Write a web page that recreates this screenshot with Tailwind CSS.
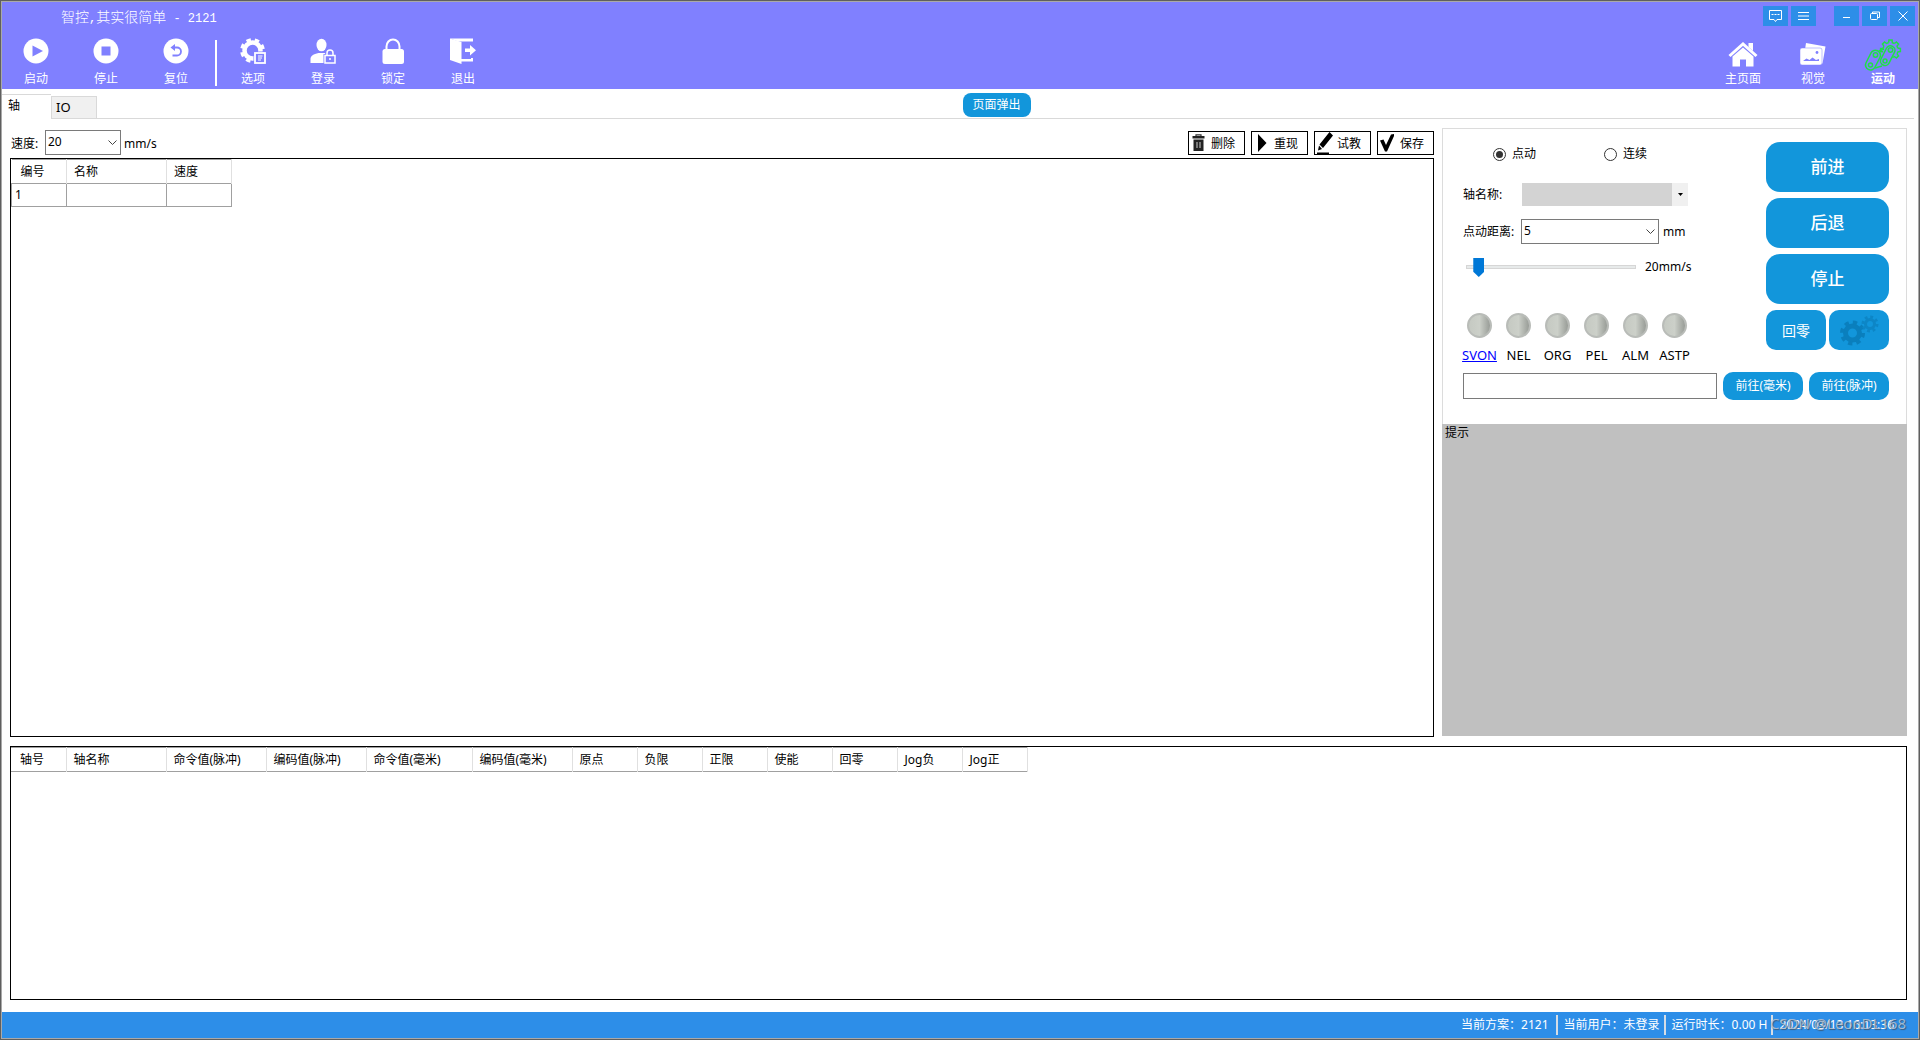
<!DOCTYPE html>
<html lang="zh-CN">
<head>
<meta charset="utf-8">
<meta name="viewport" content="width=device-width, initial-scale=1">
<title>智控,其实很简单 - 2121</title>
<script src="https://cdn.jsdelivr.net/npm/@tailwindcss/browser@4"></script>
</head>
<body class="h-screen border border-[#5f5f5f] bg-white font-['Noto_Sans','Noto_Sans_CJK_SC',sans-serif] text-[12px] leading-4 text-black">
<div class="flex h-full flex-col border border-[#a9a9a9]">

  <!-- Title bar and main toolbar -->
  <header class="flex h-[87px] shrink-0 flex-col bg-[#8080ff] text-white">
    <div class="flex h-[34px] items-start justify-between pr-[3px]">
      <h1 class="pt-1 pl-[59px] font-['Noto_Sans_CJK_SC',sans-serif] text-[14px] leading-5 font-light whitespace-pre">智控<span class="font-['Liberation_Mono',monospace] text-[12px]">,</span>其实很简单<span class="font-['Liberation_Mono',monospace] text-[12px]"> - 2121</span></h1>
      <div class="flex gap-[3px] pt-1">
        <button class="flex h-5 w-[25px] items-center justify-center bg-[#2d8ee8]" aria-label="消息">
          <svg class="h-3 w-[13px]" viewBox="0 0 13 12" fill="none" stroke="#fff"><path d="M.5.5h12v9H8l-1.500 2-1.500-2H.5z"/><path d="M2.500 4.500h8" stroke-dasharray="2 1"/></svg>
        </button>
        <button class="mr-[15px] flex h-5 w-[25px] items-center justify-center bg-[#2d8ee8]" aria-label="菜单">
          <svg class="h-2 w-[11px]" viewBox="0 0 11 8" stroke="#fff"><path d="M0 .5h11M0 4h11M0 7.500h11"/></svg>
        </button>
        <button class="flex h-5 w-[25px] items-center justify-center bg-[#2d8ee8]" aria-label="最小化">
          <svg class="mt-1 h-1 w-[7px]" viewBox="0 0 7 4" stroke="#fff"><path d="M0 1.500h7"/></svg>
        </button>
        <button class="flex h-5 w-[25px] items-center justify-center bg-[#2d8ee8]" aria-label="还原">
          <svg class="h-[10px] w-3" viewBox="0 0 12 10" fill="none" stroke="#fff"><rect x="1.500" y="2.500" width="7" height="6" rx="1"/><path d="M3.500 2V1h7v5.500H9"/></svg>
        </button>
        <button class="flex h-5 w-[25px] items-center justify-center bg-[#2d8ee8]" aria-label="关闭">
          <svg class="size-[10px]" viewBox="0 0 10 10" stroke="#fff"><path d="M.5.5l9 9M9.500.5l-9 9"/></svg>
        </button>
      </div>
    </div>

    <div class="flex justify-between pr-[15px] pl-[14px] font-['Noto_Sans_CJK_SC',sans-serif]">
      <div class="flex">
        <div class="flex gap-[30px]">
          <button class="flex w-10 flex-col items-center gap-[6px] pt-[2px]">
            <svg class="size-[26px]" viewBox="0 0 26 26"><circle cx="13" cy="13" r="12.500" fill="#fff"/><path d="M9.500 7.500v11L20 13z" fill="#8080ff"/></svg>
            <span>启动</span>
          </button>
          <button class="flex w-10 flex-col items-center gap-[6px] pt-[2px]">
            <svg class="size-[26px]" viewBox="0 0 26 26"><circle cx="13" cy="13" r="12.500" fill="#fff"/><rect x="8.500" y="8.500" width="9" height="9" fill="#8080ff"/></svg>
            <span>停止</span>
          </button>
          <button class="flex w-10 flex-col items-center gap-[6px] pt-[2px]">
            <svg class="size-[26px]" viewBox="0 0 26 26"><circle cx="13" cy="13" r="12.500" fill="#fff"/><path d="M10 9.500h4a4 4 0 0 1 0 8H9.500" fill="none" stroke="#8080ff" stroke-width="1.800"/><path d="M12 6v7L7.500 9.500z" fill="#8080ff"/></svg>
            <span>复位</span>
          </button>
        </div>
        <div class="mt-1 mr-4 ml-[19px] h-[46px] w-[2px] bg-white"></div>
        <div class="flex gap-[30px]">
          <button class="flex w-10 flex-col items-center gap-[6px] pt-[2px]">
            <svg class="size-[26px]" viewBox="0 0 26 26" fill="none">
              <circle cx="12.500" cy="12.500" r="8" stroke="#fff" stroke-width="4.500"/>
              <circle cx="12.500" cy="12.500" r="10.700" stroke="#fff" stroke-width="3.400" stroke-dasharray="4.400 4" stroke-dashoffset="-2"/>
              <path d="M13.500 13.500H26V26H13.500z" fill="#8080ff"/>
              <rect x="15" y="15" width="10" height="10" stroke="#fff" stroke-width="1.800"/>
              <path d="M18 18h4.500M18 20h4M18 22h3" stroke="#fff"/>
            </svg>
            <span>选项</span>
          </button>
          <button class="flex w-10 flex-col items-center gap-[6px] pt-[2px]">
            <svg class="size-[26px]" viewBox="0 0 26 26" fill="none">
              <ellipse cx="11.500" cy="7" rx="5" ry="6.300" fill="#fff"/>
              <path d="M.5 25v-4c0-3 3-5 8-6h6c1 0 1 1 0 2v8z" fill="#fff"/>
              <path d="M13.500 16h12v10h-12z" fill="#8080ff"/>
              <rect x="15" y="17.500" width="10" height="7.500" stroke="#fff" stroke-width="1.500"/>
              <path d="M17 17v-2a3 3 0 0 1 6 0v2" stroke="#fff" stroke-width="1.500"/>
              <circle cx="20" cy="21" r="1" fill="#fff"/>
            </svg>
            <span>登录</span>
          </button>
          <button class="flex w-10 flex-col items-center gap-[6px] pt-[2px]">
            <svg class="size-[26px]" viewBox="0 0 26 26"><rect x="2.500" y="11" width="21.500" height="15" rx="2.500" fill="#fff"/><path d="M6.500 12V8.500a6.500 7 0 0 1 13 0V12" fill="none" stroke="#fff" stroke-width="2"/></svg>
            <span>锁定</span>
          </button>
          <button class="flex w-10 flex-col items-center gap-[6px] pt-[2px]">
            <svg class="size-[26px]" viewBox="0 0 26 26" fill="#fff"><path d="M0 .5l11.500 3.500v22L0 22z"/><path d="M0 .5h23v3H8zM10 21h11v-1h2v3.500H10z"/><path d="M15 10.500h5V7l6 5.200-6 5.200v-3.500h-5z"/></svg>
            <span>退出</span>
          </button>
        </div>
      </div>

      <nav class="flex gap-[30px]">
        <button class="flex w-10 flex-col items-center gap-[6px] pt-[2px]">
          <svg class="h-[26px] w-[30px] translate-y-1" viewBox="0 0 30 26" fill="#fff"><path d="M20.500 1H25v8l-4.500-4z"/><path d="M1.500 14L15 2l13.500 12" fill="none" stroke="#fff" stroke-width="3"/><path d="M4.500 14.500L15 5.500l10.500 9V24.500h-7.500v-7h-6v7H4.500z"/></svg>
          <span class="whitespace-nowrap">主页面</span>
        </button>
        <button class="flex w-10 flex-col items-center gap-[6px] pt-[2px]">
          <svg class="size-[26px] translate-y-1" viewBox="0 0 26 26"><path d="M6 1l19.500 3.500-3 17H20V7.500H5z" fill="#fff"/><rect x="0" y="6" width="22" height="17" rx="2" fill="#fff" stroke="#8080ff" stroke-width=".5"/><path d="M3 19l3.500-2.500 3 1.500 3-2.500 3.500 2.500 3-1v2z" fill="#8080ff"/><circle cx="17" cy="10.500" r="1.400" fill="#8080ff"/></svg>
          <span>视觉</span>
        </button>
        <button class="flex w-10 flex-col items-center gap-[6px] pt-[2px] font-bold" aria-current="page">
          <svg class="h-[26px] w-9 translate-y-1 overflow-visible" viewBox="0 0 36 26" fill="none" stroke="#1fe047" stroke-width="1.500">
            <defs><path id="tooth" d="M7.370-1.840L9.880-1.560V1.560L7.370 1.840L6.510 3.910"/></defs>
            <g transform="translate(25.500 8)">
              <use href="#tooth"/><use href="#tooth" transform="rotate(45)"/><use href="#tooth" transform="rotate(180)"/><use href="#tooth" transform="rotate(225)"/><use href="#tooth" transform="rotate(270)"/><use href="#tooth" transform="rotate(315)"/>
            </g>
            <rect x="-5" y="-5" width="21" height="10" rx="5" transform="translate(5.500 23) rotate(-63)"/>
            <circle cx="5.500" cy="23" r="2"/><circle cx="10.500" cy="13" r="2.200"/>
            <rect x="-4.500" y="-4.500" width="21" height="9" rx="4.500" transform="translate(20 19) rotate(-63)"/>
            <circle cx="20" cy="19" r="2"/><circle cx="25.500" cy="8" r="2.200"/>
            <path d="M14 9l5-2M10 26l7-2"/>
          </svg>
          <span>运动</span>
        </button>
      </nav>
    </div>
  </header>

  <!-- Page tabs -->
  <div class="mr-1 flex h-[30px] shrink-0 items-end">
    <div class="flex items-end" role="tablist">
      <button class="h-[25px] w-[49px] border-t border-[#d9d9d9] pb-[2px] pl-[6px] text-left" role="tab" aria-selected="true">轴</button>
      <button class="h-[23px] w-[46px] border border-[#d9d9d9] bg-[#f0f0f0] pb-[2px] pl-1 text-left text-[13px]" role="tab" aria-selected="false">IO</button>
    </div>
    <div class="flex h-[26px] grow items-start justify-center border-b border-[#d9d9d9] pr-[18px]">
      <button class="h-6 w-[68px] rounded-lg bg-[#1296db] text-white">页面弹出</button>
    </div>
  </div>

  <main class="flex min-h-0 grow flex-col gap-[9px] pt-[9px] pr-[11px] pb-3 pl-2">
    <div class="flex min-h-0 grow gap-2">

      <!-- Teaching points -->
      <section class="flex min-w-0 grow flex-col gap-[3px] pt-[2px]">
        <div class="flex items-center justify-between">
          <div class="flex items-center gap-[3px]">
            <label for="speed" class="w-8 pt-[2px] pl-px whitespace-nowrap">速度:</label>
            <div class="relative">
              <select id="speed" class="block h-[25px] w-[76px] appearance-none border border-[#7a7a7a] bg-white pb-[2px] pl-[2px]"><option>20</option><option>50</option></select>
              <svg class="pointer-events-none absolute top-[10px] right-1 h-[6px] w-[9px]" viewBox="0 0 9 6" fill="none" stroke="#444"><path d="M.5.5l4 4 4-4"/></svg>
            </div>
            <span class="pt-[2px]">mm/s</span>
          </div>
          <div class="flex gap-[6px]">
            <button class="flex h-6 w-[57px] items-center gap-[6px] border border-black pl-[3px] whitespace-nowrap">
              <svg class="h-[18px] w-[13px]" viewBox="0 0 13 18"><path d="M4 2.500V.8h5v1.700" fill="none" stroke="#333" stroke-width="1.200"/><path d="M.5 2h12v2.500H.5zM1.500 5.500h10V17h-10z" fill="#222"/><path d="M5 8v6M8 8v6" stroke="#ccc"/></svg>
              <span class="pt-[2px]">删除</span>
            </button>
            <button class="flex h-6 w-[57px] items-center gap-[6px] border border-black pl-[3px] whitespace-nowrap">
              <svg class="h-[18px] w-[13px]" viewBox="0 0 13 18"><path d="M3 0v18l8.500-9z"/></svg>
              <span class="pt-[2px]">重现</span>
            </button>
            <button class="flex h-6 w-[57px] items-center gap-1 border border-black pl-[2px] whitespace-nowrap">
              <svg class="h-[22px] w-4" viewBox="0 0 16 22"><path d="M12.500 0L16 3.500 6 16 2.500 12.500zM2 13.500L5 17l-4 1.500zM0 20.500h12V22H0z"/></svg>
              <span class="pt-[2px]">试教</span>
            </button>
            <button class="flex h-6 w-[57px] items-center gap-[6px] border border-black pl-[2px] whitespace-nowrap">
              <svg class="h-[18px] w-[14px]" viewBox="0 0 14 18"><path d="M0 6.500l3.500-1L6 11 11 .5l3-.5v2L7 17.500H5z"/></svg>
              <span class="pt-[2px]">保存</span>
            </button>
          </div>
        </div>
        <div class="grow border border-black">
          <table class="table-fixed border-collapse text-left">
            <thead>
              <tr class="h-6 border-t border-b border-[#a0a0a0]">
                <th class="w-[55px] border-r border-[#e0e0e0] pl-[9px] font-normal">编号</th>
                <th class="w-[100px] border-r border-[#e0e0e0] pl-[7px] font-normal">名称</th>
                <th class="w-[65px] border-r border-[#e0e0e0] pl-[7px] font-normal">速度</th>
              </tr>
            </thead>
            <tbody>
              <tr class="h-[23px]">
                <td class="border border-[#a0a0a0] pl-[3px]">1</td>
                <td class="border border-[#a0a0a0]"></td>
                <td class="border border-[#a0a0a0]"></td>
              </tr>
            </tbody>
          </table>
        </div>
      </section>

      <!-- Manual axis control -->
      <aside class="flex w-[465px] shrink-0 flex-col pb-px">
        <div class="border border-b-0 border-[#dcdcdc] pt-[13px] pr-[17px] pb-6 pl-5">
          <div class="flex justify-between">
            <div class="flex flex-col">
              <div class="flex gap-[68px] pt-1 pl-[30px]">
                <label class="flex items-center gap-[6px]"><input type="radio" name="mode" checked class="size-[13px] appearance-none rounded-full border border-[#333] bg-clip-content p-[2px] checked:bg-[#333]">点动</label>
                <label class="flex items-center gap-[6px]"><input type="radio" name="mode" class="size-[13px] appearance-none rounded-full border border-[#333] bg-clip-content p-[2px] checked:bg-[#333]">连续</label>
              </div>
              <div class="mt-[21px] flex h-[23px] items-center">
                <label for="axis" class="w-[59px]">轴名称:</label>
                <div class="relative">
                  <select id="axis" class="block h-[23px] w-[166px] appearance-none border-r-[16px] border-[#f0f0f0] bg-[#d3d3d3]"><option></option></select>
                  <svg class="pointer-events-none absolute top-[10px] right-[5px] h-[3px] w-[5px]" viewBox="0 0 5 3"><path d="M0 0h5L2.500 3z"/></svg>
                </div>
              </div>
              <div class="mt-[13px] flex h-[25px] items-center">
                <label for="step" class="w-[58px]">点动距离:</label>
                <div class="relative">
                  <select id="step" class="block h-[25px] w-[138px] appearance-none border border-[#7a7a7a] bg-white pb-[2px] pl-[2px]"><option>5</option><option>10</option></select>
                  <svg class="pointer-events-none absolute top-[10px] right-1 h-[6px] w-[9px]" viewBox="0 0 9 6" fill="none" stroke="#444"><path d="M.5.5l4 4 4-4"/></svg>
                </div>
                <span class="pl-1">mm</span>
              </div>
              <div class="mt-[13px] flex items-center gap-[9px] pl-[3px]">
                <input id="jog-speed" type="range" min="0" max="500" value="20" aria-label="点动速度" class="h-5 w-[170px] appearance-none bg-transparent [&::-webkit-slider-runnable-track]:h-1 [&::-webkit-slider-runnable-track]:border [&::-webkit-slider-runnable-track]:border-[#d6d6d6] [&::-webkit-slider-runnable-track]:bg-[#e7eaea] [&::-webkit-slider-thumb]:-mt-2 [&::-webkit-slider-thumb]:h-[19px] [&::-webkit-slider-thumb]:w-[11px] [&::-webkit-slider-thumb]:appearance-none [&::-webkit-slider-thumb]:bg-[#0078d7] [&::-webkit-slider-thumb]:[clip-path:polygon(0_0,100%_0,100%_72%,50%_100%,0_72%)]">
                <output for="jog-speed">20mm/s</output>
              </div>
              <ul class="mt-9 -ml-[3px] grid w-[234px] grid-cols-6 text-[13px]">
                <li class="flex flex-col items-center gap-[9px]"><span class="size-[25px] rounded-full border-2 border-[#b9bcb8] bg-linear-to-r from-[#c4c8c1] via-[#ccd0c9] to-[#8f938e] bg-origin-border"></span><a href="#svon" class="text-[#0000ff] underline">SVON</a></li>
                <li class="flex flex-col items-center gap-[9px]"><span class="size-[25px] rounded-full border-2 border-[#b9bcb8] bg-linear-to-r from-[#c4c8c1] via-[#ccd0c9] to-[#8f938e] bg-origin-border"></span>NEL</li>
                <li class="flex flex-col items-center gap-[9px]"><span class="size-[25px] rounded-full border-2 border-[#b9bcb8] bg-linear-to-r from-[#c4c8c1] via-[#ccd0c9] to-[#8f938e] bg-origin-border"></span>ORG</li>
                <li class="flex flex-col items-center gap-[9px]"><span class="size-[25px] rounded-full border-2 border-[#b9bcb8] bg-linear-to-r from-[#c4c8c1] via-[#ccd0c9] to-[#8f938e] bg-origin-border"></span>PEL</li>
                <li class="flex flex-col items-center gap-[9px]"><span class="size-[25px] rounded-full border-2 border-[#b9bcb8] bg-linear-to-r from-[#c4c8c1] via-[#ccd0c9] to-[#8f938e] bg-origin-border"></span>ALM</li>
                <li class="flex flex-col items-center gap-[9px]"><span class="size-[25px] rounded-full border-2 border-[#b9bcb8] bg-linear-to-r from-[#c4c8c1] via-[#ccd0c9] to-[#8f938e] bg-origin-border"></span>ASTP</li>
              </ul>
            </div>
            <div class="grid w-[123px] grid-cols-2 content-start gap-x-[3px] gap-y-[6px] font-['Noto_Sans_CJK_SC',sans-serif] text-white">
              <button class="col-span-2 h-[50px] rounded-[14px] bg-[#1296db] pb-[2px] text-[17px] font-medium">前进</button>
              <button class="col-span-2 h-[50px] rounded-[14px] bg-[#1296db] pb-[2px] text-[17px] font-medium">后退</button>
              <button class="col-span-2 h-[50px] rounded-[14px] bg-[#1296db] pb-[2px] text-[17px] font-medium">停止</button>
              <button class="h-10 rounded-[10px] bg-[#1296db] text-[14px]">回零</button>
              <button class="flex h-10 items-center justify-center rounded-[10px] bg-[#1296db]" aria-label="轴设置">
                <svg class="h-[31px] w-10" viewBox="0 0 40 31" fill="none">
                  <g stroke="#0a7fbd">
                    <circle cx="13.500" cy="18" r="7" stroke-width="5"/><circle cx="13.500" cy="18" r="10.500" stroke-width="4" stroke-dasharray="4.250 4"/>
                    <circle cx="31" cy="9" r="4.500" stroke-width="3" stroke="#0d86c6"/><circle cx="31" cy="9" r="7" stroke-width="3" stroke="#0d86c6" stroke-dasharray="2.750 2.750"/>
                  </g>
                </svg>
              </button>
            </div>
          </div>
          <div class="mt-[9px] flex items-center gap-[6px]">
            <input type="text" aria-label="目标位置" class="h-[26px] min-w-0 grow border border-[#7a7a7a] bg-white px-1">
            <button class="h-7 w-20 rounded-[10px] bg-[#1296db] text-white">前往(毫米)</button>
            <button class="h-7 w-20 rounded-[10px] bg-[#1296db] text-white">前往(脉冲)</button>
          </div>
        </div>
        <div class="grow bg-[#c0c0c0] pt-px pl-[3px]">提示</div>
      </aside>
    </div>

    <!-- Axis status -->
    <section class="h-[254px] shrink-0 border border-black">
      <table class="table-fixed border-collapse text-left">
        <thead>
          <tr class="h-6 border-t border-b border-[#a0a0a0]">
            <th class="w-[55px] border-r border-[#e0e0e0] pl-[9px] font-normal">轴号</th>
            <th class="w-[100px] border-r border-[#e0e0e0] pl-[7px] font-normal">轴名称</th>
            <th class="w-[100px] border-r border-[#e0e0e0] pl-[7px] font-normal">命令值(脉冲)</th>
            <th class="w-[100px] border-r border-[#e0e0e0] pl-[7px] font-normal">编码值(脉冲)</th>
            <th class="w-[106px] border-r border-[#e0e0e0] pl-[7px] font-normal">命令值(毫米)</th>
            <th class="w-[100px] border-r border-[#e0e0e0] pl-[7px] font-normal">编码值(毫米)</th>
            <th class="w-[65px] border-r border-[#e0e0e0] pl-[7px] font-normal">原点</th>
            <th class="w-[65px] border-r border-[#e0e0e0] pl-[7px] font-normal">负限</th>
            <th class="w-[65px] border-r border-[#e0e0e0] pl-[7px] font-normal">正限</th>
            <th class="w-[65px] border-r border-[#e0e0e0] pl-[7px] font-normal">使能</th>
            <th class="w-[65px] border-r border-[#e0e0e0] pl-[7px] font-normal">回零</th>
            <th class="w-[65px] border-r border-[#e0e0e0] pl-[7px] font-normal">Jog负</th>
            <th class="w-[65px] border-r border-[#e0e0e0] pl-[7px] font-normal">Jog正</th>
          </tr>
        </thead>
      </table>
    </section>
  </main>

  <!-- Status bar -->
  <footer class="relative flex h-[26px] shrink-0 items-center justify-end bg-[#2d8ee8] pr-6 whitespace-nowrap text-white">
    <span>当前方案：2121</span>
    <span class="mr-[6px] ml-[7px] h-5 w-[2px] bg-[#d5dde6]"></span>
    <span>当前用户：未登录</span>
    <span class="mr-[6px] ml-1 h-5 w-[2px] bg-[#d5dde6]"></span>
    <span>运行时长：0.00 H</span>
    <span class="mr-[6px] ml-1 h-5 w-[2px] bg-[#d5dde6]"></span>
    <span>2024/03/13 16:13:36</span>
    <span class="absolute right-3 bottom-[5px] font-['Open_Sans',sans-serif] text-[15px] leading-5 text-[#b4c3d3]/90 [text-shadow:1px_1px_1px_#3c5a78]">CSDN @LeonDL168</span>
  </footer>
</div>
</body>
</html>
